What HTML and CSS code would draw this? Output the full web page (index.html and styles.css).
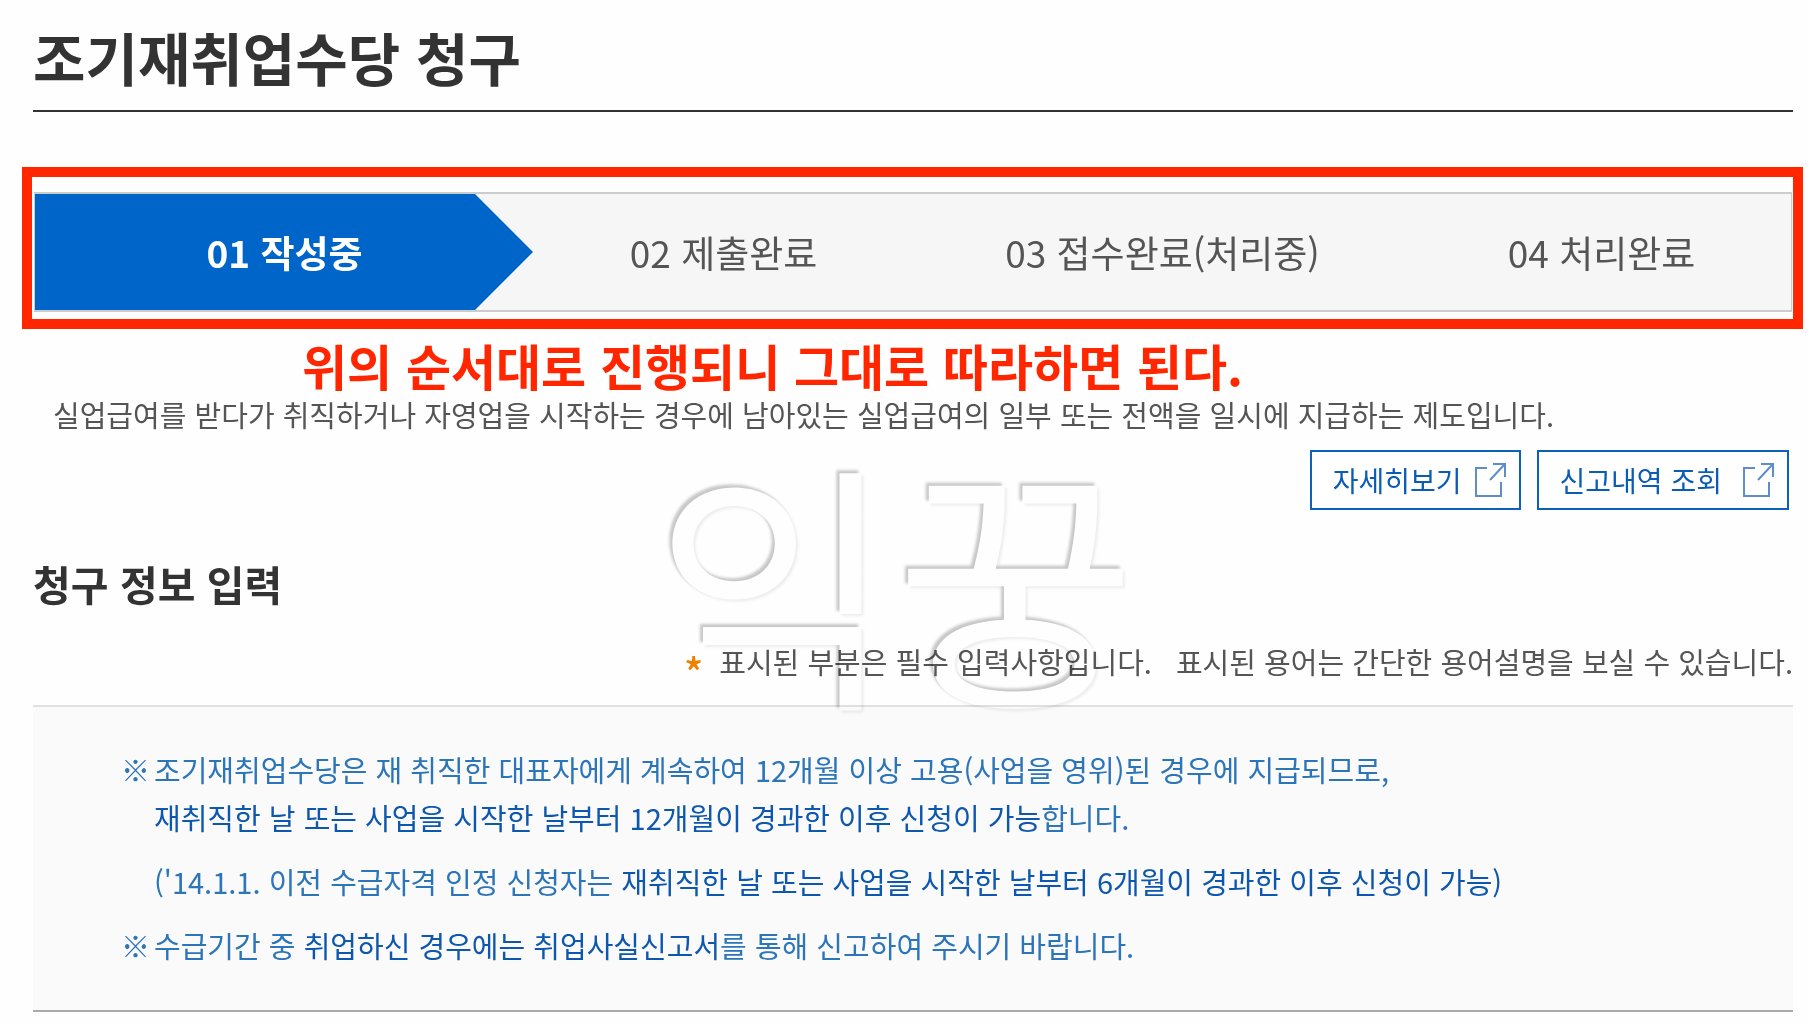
FILE: index.html
```html
<!DOCTYPE html>
<html lang="ko">

<head>
  <meta charset="UTF-8">
  <meta name="viewport" content="width=device-width, initial-scale=1.0">
  <title>조기재취업수당 청구</title>
  <link rel="stylesheet" href="styles.css">
</head>

<body>
  <main class="page">
    <h1 class="title">조기재취업수당 청구</h1>

    <div class="highlight">
      <ol class="steps">
        <li class="step active">01 작성중</li>
        <li class="step">02 제출완료</li>
        <li class="step">03 접수완료(처리중)</li>
        <li class="step">04 처리완료</li>
      </ol>
    </div>
    <p class="memo">위의 순서대로 진행되니 그대로 따라하면 된다.</p>

    <p class="desc">실업급여를 받다가 취직하거나 자영업을 시작하는 경우에 남아있는 실업급여의 일부 또는 전액을 일시에 지급하는 제도입니다.</p>

    <div class="buttons">
      <button type="button" class="btn">
        자세히보기
        <svg class="icon" viewBox="0 0 32 36" aria-hidden="true">
          <path d="M13 6H2v28h25V20" />
          <path d="M16 18L30 3M19 2h12v13" />
        </svg>
      </button>
      <button type="button" class="btn btn-wide">
        신고내역 조회
        <svg class="icon" viewBox="0 0 32 36" aria-hidden="true">
          <path d="M13 6H2v28h25V20" />
          <path d="M16 18L30 3M19 2h12v13" />
        </svg>
      </button>
    </div>

    <h2 class="subtitle">청구 정보 입력</h2>

    <div class="guide">
      <span class="star">*</span>
      <span>표시된 부분은 필수 입력사항입니다.</span>
      <span class="term">표시된 용어는 간단한 용어설명을 보실 수 있습니다.</span>
    </div>

    <div class="notice">
      <div class="row">
        <span class="mark">※</span>
        <p>조기재취업수당은 재 취직한 대표자에게 계속하여 12개월 이상 고용(사업을 영위)된 경우에 지급되므로,<br><strong>재취직한 날 또는 사업을 시작한 날부터 12개월이 경과한 이후 신청이 가능</strong>합니다.</p>
      </div>
      <div class="row">
        <span class="mark"></span>
        <p>('14.1.1. 이전 수급자격 인정 신청자는 <strong>재취직한 날 또는 사업을 시작한 날부터 6개월이 경과한 이후 신청이 가능)</strong></p>
      </div>
      <div class="row">
        <span class="mark">※</span>
        <p>수급기간 중 <strong>취업하신 경우에는 취업사실신고서</strong>를 통해 신고하여 주시기 바랍니다.</p>
      </div>
    </div>

    <div class="watermark" aria-hidden="true">익꿍</div>
  </main>
</body>

</html>
```
FILE: styles.css
```css
* {
  box-sizing: border-box;
  margin: 0;
  padding: 0;
}

body {
  background: #fefefe;
  color: #555;
  font-family: "Noto Sans CJK KR", sans-serif;
  font-size: 29px;
  line-height: 32px;
}

.page {
  position: relative;
  padding: 24px 15px 14px 33px;
}

.title {
  padding-bottom: 22px;
  border-bottom: 2px solid #333;
  color: #333;
  font-size: 57px;
  line-height: 64px;
}

/* 진행 단계 */
.highlight {
  margin: 55px -10px 0 -11px;
  padding: 15px 1px 7px 2px;
  border: 10px solid #ff2600;
}

.steps {
  display: grid;
  grid-template-columns: repeat(4, 1fr);
  list-style: none;
  border: 2px solid #ccc;
  border-width: 2px 1px;
  background: #f6f6f6;
}

.step {
  position: relative;
  padding: 34px 0 34px 60px;
  font-size: 37px;
  line-height: 48px;
  text-align: center;
  white-space: nowrap;
}

.step.active {
  background: #0065c8;
  color: #fff;
  font-weight: bold;
}

/* 현재 단계 화살표 */
.step.active::after {
  content: "";
  position: absolute;
  top: 0;
  left: calc(100% - 1px);
  width: 60px;
  height: 100%;
  background: #0065c8;
  clip-path: polygon(0 0, 2px 0, 100% 50%, 2px 100%, 0 100%);
}

.memo {
  padding: 6px 0 0 269px;
  color: #ff2600;
  font-size: 49px;
  font-weight: bold;
  line-height: 60px;
}

.desc {
  margin-top: 3px;
  padding-left: 20px;
}

.buttons {
  display: flex;
  justify-content: flex-end;
  gap: 16px;
  margin-top: 20px;
  padding-right: 4px;
}

.btn {
  display: flex;
  align-items: center;
  gap: 12px;
  height: 60px;
  padding: 0 13px 0 21px;
  border: 2px solid #0b62b8;
  background: #fff;
  color: #0b5cb4;
  font: inherit;
  font-size: 28px;
  cursor: pointer;
}

.btn-wide {
  gap: 20px;
}

.icon {
  width: 32px;
  height: 36px;
  fill: none;
  stroke: #5f8ccb;
  stroke-width: 2;
}

.subtitle {
  margin-top: 49px;
  color: #333;
  font-size: 41px;
  line-height: 48px;
}

.guide {
  display: flex;
  justify-content: flex-end;
  align-items: center;
  margin: 38px 0 28px;
}

.star {
  height: 32px;
  margin-right: 16px;
  padding-top: 10px;
  color: #f08000;
  font-size: 40px;
  font-weight: 500;
}

.term {
  margin-left: 24px;
}

.notice {
  display: grid;
  gap: 16px;
  padding: 38px 88px 41px;
  border-top: 2px solid #e0e0e0;
  border-bottom: 2px solid #aaa;
  background: #fafafa;
  color: #2c75b9;
  line-height: 48px;
}

.row {
  display: flex;
}

.mark {
  width: 33px;
  flex-shrink: 0;
  font-weight: 500;
}

.notice strong {
  color: #0d57ae;
  font-weight: normal;
}

/* 양각 워터마크 */
.watermark {
  position: absolute;
  top: 445px;
  left: 654px;
  color: #fff;
  font-size: 262px;
  line-height: 262px;
  text-shadow: -3px -3px 3px #c8c8c8, 2px 2px 3px #eee;
  mix-blend-mode: multiply;
  pointer-events: none;
}
```
